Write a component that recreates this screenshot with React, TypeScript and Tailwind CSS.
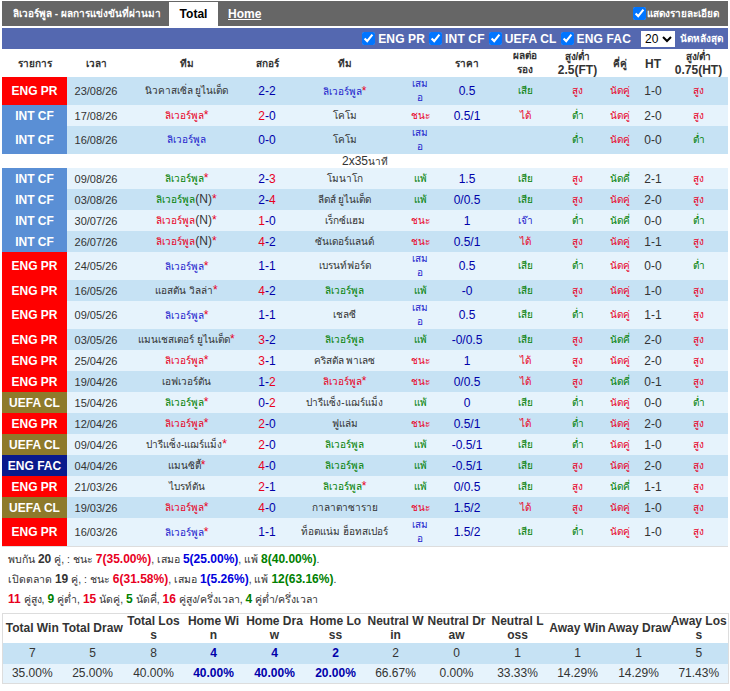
const B = "text-[#0000aa]";
const R = "text-[#e8001e]";
const G = "text-[#008000]";
const D = "text-[#333333]";
const L = "text-[#2222cc]";

const LEAGUE: Record<string, string> = {
  "ENG PR": "bg-[#ff0000]",
  "INT CF": "bg-[#5a8fd5]",
  "UEFA CL": "bg-[#8e7a2b]",
  "ENG FAC": "bg-[#0a1a8c]",
};

type Row = {
  l: string; d: string; h: string; hc: string; hs: boolean; n?: boolean; s: string; a: string; ac: string; as: boolean;
  r: string; o: string; p: string; ou: string; oe: string; ht: string; hou: string; tall?: boolean;
};

const LIV = "ลิเวอร์พูล";

function row(l: string, d: string, h: string, hc: string, hs: boolean, s: string, a: string, ac: string, as: boolean, r: string, o: string, p: string, ou: string, oe: string, ht: string, hou: string, n = false): Row {
  return { l, d, h, hc, hs, s, a, ac, as, r, o, p, ou, oe, ht, hou, n, tall: r === "เสมอ" };
}

const ROWS: Row[] = [
  row("ENG PR", "23/08/26", "นิวคาสเซิ่ล ยูไนเต็ด", D, false, "2-2", LIV, L, true, "เสมอ", "0.5", "เสีย", "สูง", "นัดคู่", "1-0", "สูง"),
  row("INT CF", "17/08/26", LIV, R, true, "2-0", "โคโม", D, false, "ชนะ", "0.5/1", "ได้", "ต่ำ", "นัดคู่", "2-0", "สูง"),
  row("INT CF", "16/08/26", LIV, L, false, "0-0", "โคโม", D, false, "เสมอ", "", "", "ต่ำ", "นัดคู่", "0-0", "ต่ำ"),
  row("INT CF", "09/08/26", LIV, G, true, "2-3", "โมนาโก", D, false, "แพ้", "1.5", "เสีย", "สูง", "นัดคี่", "2-1", "สูง"),
  row("INT CF", "03/08/26", LIV, G, true, "2-4", "ลีดส์ ยูไนเต็ด", D, false, "แพ้", "0/0.5", "เสีย", "สูง", "นัดคู่", "2-0", "สูง", true),
  row("INT CF", "30/07/26", LIV, R, true, "1-0", "เร็กซ์แฮม", D, false, "ชนะ", "1", "เจ๊า", "ต่ำ", "นัดคี่", "0-0", "ต่ำ", true),
  row("INT CF", "26/07/26", LIV, R, true, "4-2", "ซันเดอร์แลนด์", D, false, "ชนะ", "0.5/1", "ได้", "สูง", "นัดคู่", "1-1", "สูง", true),
  row("ENG PR", "24/05/26", LIV, L, true, "1-1", "เบรนท์ฟอร์ด", D, false, "เสมอ", "0.5", "เสีย", "ต่ำ", "นัดคู่", "0-0", "ต่ำ"),
  row("ENG PR", "16/05/26", "แอสตัน วิลล่า", D, true, "4-2", LIV, G, false, "แพ้", "-0", "เสีย", "สูง", "นัดคู่", "1-0", "สูง"),
  row("ENG PR", "09/05/26", LIV, L, true, "1-1", "เชลซี", D, false, "เสมอ", "0.5", "เสีย", "ต่ำ", "นัดคู่", "1-1", "สูง"),
  row("ENG PR", "03/05/26", "แมนเชสเตอร์ ยูไนเต็ด", D, true, "3-2", LIV, G, false, "แพ้", "-0/0.5", "เสีย", "สูง", "นัดคี่", "2-0", "สูง"),
  row("ENG PR", "25/04/26", LIV, R, true, "3-1", "คริสตัล พาเลซ", D, false, "ชนะ", "1", "ได้", "สูง", "นัดคู่", "2-0", "สูง"),
  row("ENG PR", "19/04/26", "เอฟเวอร์ตัน", D, false, "1-2", LIV, R, true, "ชนะ", "0/0.5", "ได้", "สูง", "นัดคี่", "0-1", "สูง"),
  row("UEFA CL", "15/04/26", LIV, G, true, "0-2", "ปารีแซ็ง-แฌร์แม็ง", D, false, "แพ้", "0", "เสีย", "ต่ำ", "นัดคู่", "0-0", "ต่ำ"),
  row("ENG PR", "12/04/26", LIV, R, true, "2-0", "ฟูแล่ม", D, false, "ชนะ", "0.5/1", "ได้", "ต่ำ", "นัดคู่", "2-0", "สูง"),
  row("UEFA CL", "09/04/26", "ปารีแซ็ง-แฌร์แม็ง", D, true, "2-0", LIV, G, false, "แพ้", "-0.5/1", "เสีย", "ต่ำ", "นัดคู่", "1-0", "สูง"),
  row("ENG FAC", "04/04/26", "แมนซิตี้", D, true, "4-0", LIV, G, false, "แพ้", "-0.5/1", "เสีย", "สูง", "นัดคู่", "2-0", "สูง"),
  row("ENG PR", "21/03/26", "ไบรท์ตัน", D, false, "2-1", LIV, G, true, "แพ้", "0/0.5", "เสีย", "สูง", "นัดคี่", "1-1", "สูง"),
  row("UEFA CL", "19/03/26", LIV, R, true, "4-0", "กาลาตาซาราย", D, false, "ชนะ", "1.5/2", "ได้", "สูง", "นัดคู่", "1-0", "สูง"),
  row("ENG PR", "16/03/26", LIV, L, true, "1-1", "ท็อตแน่ม ฮ็อทสเปอร์", D, false, "เสมอ", "1.5/2", "เสีย", "ต่ำ", "นัดคู่", "1-0", "สูง"),
];

function tone(v: string) {
  if (v === "สูง" || v === "ได้" || v === "ชนะ" || v === "นัดคู่") return R;
  if (v === "เจ๊า" || v === "เสมอ") return L;
  return G;
}

function Team({ name, color, star, n }: { name: string; color: string; star: boolean; n?: boolean }) {
  return (
    <span>
      <span className={color}>{name}</span>
      {n && <span className={`${D} text-[12px]`}>(N)</span>}
      {star && <span className="text-[#e8001e] text-[12px]">*</span>}
    </span>
  );
}

function Score({ s }: { s: string }) {
  const [a, b] = s.split("-").map(Number);
  const ca = a > b ? R : B;
  const cb = b > a ? R : B;
  return (
    <span>
      <span className={ca}>{a}</span>
      <span className={B}>-</span>
      <span className={cb}>{b}</span>
    </span>
  );
}

function Filter({ label }: { label: string }) {
  return (
    <label className="flex items-center gap-[3px] text-white font-bold text-[12px] tracking-[0.15px]">
      <input type="checkbox" defaultChecked className="m-0 w-[13px] h-[13px]" />
      {label}
    </label>
  );
}

const STATS = [
  ["Total Win", "", "7", "35.00%", false],
  ["Total Draw", "", "5", "25.00%", false],
  ["Total Los", "s", "8", "40.00%", false],
  ["Home Wi", "n", "4", "40.00%", true],
  ["Home Dra", "w", "4", "40.00%", true],
  ["Home Lo", "ss", "2", "20.00%", true],
  ["Neutral W", "in", "2", "66.67%", false],
  ["Neutral Dr", "aw", "0", "0.00%", false],
  ["Neutral L", "oss", "1", "33.33%", false],
  ["Away Win", "", "1", "14.29%", false],
  ["Away Draw", "", "1", "14.29%", false],
  ["Away Los", "s", "5", "71.43%", false],
] as const;

const COLS = [65, 58, 123, 38, 117, 34, 60, 56, 49, 35, 32, 59];
const STAT_COLS = [59, 62, 60, 60, 62, 60, 60, 62, 60, 60, 62, 59];

const HEAD: [string, string?][] = [
  ["รายการ"], ["เวลา"], ["ทีม"], ["สกอร์"], ["ทีม"], [""], ["ราคา"], ["ผลต่อ", "รอง"], ["สูง/ต่ำ", "2.5(FT)"], ["คี่คู่"], ["HT"], ["สูง/ต่ำ", "0.75(HT)"],
];

const NUM = "text-[12px]";

export default function App() {
  return (
    <div className="w-[730px] h-[691px] bg-white pt-px px-[2px] text-[12px] text-[#333333] font-['Liberation_Sans',sans-serif] overflow-hidden">
      {/* top bar */}
      <div className="h-[25px] bg-[#666666] flex items-end text-white">
        <div className="w-[167px] h-[25px] pl-[11px] flex items-center text-[10px] font-bold whitespace-nowrap">ลิเวอร์พูล - ผลการแข่งขันที่ผ่านมา</div>
        <div className="w-[49px] h-[24px] bg-white text-black font-bold flex items-center justify-center">Total</div>
        <a className="ml-[10px] h-[25px] flex items-center font-bold underline text-white">Home</a>
        <label className="ml-auto mr-[9px] h-[25px] flex items-center gap-px text-[10px] font-bold">
          <input type="checkbox" defaultChecked className="m-0 w-[13px] h-[13px]" />
          แสดงรายละเอียด
        </label>
      </div>
      {/* filters */}
      <div className="mt-[2px] h-[21px] bg-[#5468b0] flex items-center justify-end pr-[5px]">
        <div className="flex items-center gap-[4px]">
          <Filter label="ENG PR" />
          <Filter label="INT CF" />
          <Filter label="UEFA CL" />
          <Filter label="ENG FAC" />
        </div>
        <select defaultValue="20" className="ml-[10px] w-[34px] h-[16px] bg-white text-black text-[12px] leading-none">
          <option>20</option>
        </select>
        <span className="ml-[5px] text-white font-bold text-[10px] whitespace-nowrap">นัดหลังสุด</span>
      </div>
      {/* results */}
      <table className="w-[726px] table-fixed border-collapse border-b border-[#dddddd]">
        <colgroup>
          {COLS.map((w, i) => (
            <col key={i} style={{ width: w }} />
          ))}
        </colgroup>
        <thead>
          <tr className="h-[28px] text-[10px] leading-[14px] text-[#333333]">
            {HEAD.map((t, i) => (
              <th key={i} className={`p-0 text-center align-middle font-bold ${i === 10 ? "text-[12px]" : ""} ${t[1] ? "" : "pt-px"}`}>
                {t[0]}
                {t[1] && <div className={i === 7 ? "" : "text-[12px] leading-[13px]"}>{t[1]}</div>}
              </th>
            ))}
          </tr>
        </thead>
        <tbody>
          {ROWS.map((r, i) => {
            const bg = i % 2 === 0 ? "bg-[#c6e2f4]" : "bg-[#e6f3fc]";
            return [
              i === 3 ? (
                <tr key="sub" className="h-[14px] bg-white">
                  <td colSpan={12} className="p-0 text-center text-[12px] leading-[12px]">2x35<span className="text-[10px]">นาที</span></td>
                </tr>
              ) : null,
              <tr key={i} className={`${r.tall ? "h-[28px]" : "h-[21px]"} ${bg} text-[12px] text-center leading-[14px]`}>
                <td className={`p-0 ${LEAGUE[r.l]} text-white font-bold`}>{r.l}</td>
                <td className="p-0 text-[11px] text-[#333333]">{r.d}</td>
                <td className="p-0 text-[10px]"><Team name={r.h} color={r.hc} star={r.hs} n={r.n} /></td>
                <td className="p-0"><Score s={r.s} /></td>
                <td className="p-0 text-[10px]"><Team name={r.a} color={r.ac} star={r.as} /></td>
                <td className={`p-0 text-[10px] ${r.r === "เสมอ" ? "px-[8px] break-all" : "whitespace-nowrap"} ${tone(r.r)}`}>{r.r}</td>
                <td className={`p-0 ${B}`}>{r.o}</td>
                <td className={`p-0 text-[10px] ${tone(r.p)}`}>{r.p}</td>
                <td className={`p-0 text-[10px] ${tone(r.ou)}`}>{r.ou}</td>
                <td className={`p-0 text-[10px] ${tone(r.oe)}`}>{r.oe}</td>
                <td className="p-0 text-[#333333]">{r.ht}</td>
                <td className={`p-0 text-[10px] ${tone(r.hou)}`}>{r.hou}</td>
              </tr>,
            ];
          })}
        </tbody>
      </table>
      {/* summary */}
      <div className="pl-[6px] pt-[2px] text-[10.5px] text-[#333333]">
        <div className="h-[20px] leading-[20px]">พบกัน <b className={NUM}>20</b> คู่, : ชนะ <b className={`${NUM} ${R}`}>7(35.00%)</b>, เสมอ <b className={`${NUM} text-[#0000dd]`}>5(25.00%)</b>, แพ้ <b className={`${NUM} ${G}`}>8(40.00%)</b>.</div>
        <div className="h-[20px] leading-[20px]">เปิดตลาด <b className={NUM}>19</b> คู่, : ชนะ <b className={`${NUM} ${R}`}>6(31.58%)</b>, เสมอ <b className={`${NUM} text-[#0000dd]`}>1(5.26%)</b>, แพ้ <b className={`${NUM} ${G}`}>12(63.16%)</b>.</div>
        <div className="h-[20px] leading-[20px]"><b className={`${NUM} ${R}`}>11</b> คู่สูง, <b className={`${NUM} ${G}`}>9</b> คู่ต่ำ, <b className={`${NUM} ${R}`}>15</b> นัดคู่, <b className={`${NUM} ${G}`}>5</b> นัดคี่, <b className={`${NUM} ${R}`}>16</b> คู่สูง/ครึ่งเวลา, <b className={`${NUM} ${G}`}>4</b> คู่ต่ำ/ครึ่งเวลา</div>
      </div>
      {/* stats */}
      <table className="mt-[4px] w-[726px] table-fixed border-collapse border border-[#dddddd] text-center">
        <colgroup>
          {STAT_COLS.map((w, i) => (
            <col key={i} style={{ width: w }} />
          ))}
        </colgroup>
        <tbody>
          <tr className="h-[29px] bg-white leading-[14px]">
            {STATS.map(([a, b]) => (
              <th key={a} className="p-0 text-[12px] font-bold text-[#333333] whitespace-nowrap">
                {a}
                {b && <br />}
                {b}
              </th>
            ))}
          </tr>
          <tr className="h-[21px] bg-[#c6e2f4]">
            {STATS.map(([a, , v, , b]) => (
              <td key={a} className={`p-0 ${b ? "font-bold text-[#0000aa]" : ""}`}>{v}</td>
            ))}
          </tr>
          <tr className="h-[20px] bg-[#e6f3fc]">
            {STATS.map(([a, , , p, b]) => (
              <td key={a} className={`p-0 ${b ? "font-bold text-[#0000aa]" : ""}`}>{p}</td>
            ))}
          </tr>
        </tbody>
      </table>
    </div>
  );
}
